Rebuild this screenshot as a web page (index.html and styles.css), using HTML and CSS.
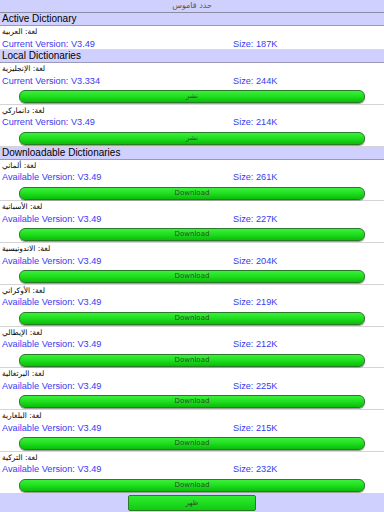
FILE: index.html
```html
<!DOCTYPE html>
<html>
<head>
<meta charset="utf-8">
<link rel="stylesheet" href="styles.css">
</head>
<body>
<div class="page">
  <div class="title">حدد قاموس</div>

  <div class="section">Active Dictionary</div>
  <div class="item item-active">
    <div class="lang">لغة: العربية</div>
    <div class="ver"><span>Current Version: V3.49</span><span>Size: 187K</span></div>
  </div>

  <div class="section">Local Dictionaries</div>
  <div class="item">
    <div class="lang">لغة: الإنجليزية</div>
    <div class="ver"><span>Current Version: V3.334</span><span>Size: 244K</span></div>
    <div class="btn">نشر</div>
  </div>
  <div class="item">
    <div class="lang">لغة: دانماركي</div>
    <div class="ver"><span>Current Version: V3.49</span><span>Size: 214K</span></div>
    <div class="btn">نشر</div>
  </div>

  <div class="section">Downloadable Dictionaries</div>
  <div class="item">
    <div class="lang">لغة: ألماني</div>
    <div class="ver"><span>Available Version: V3.49</span><span>Size: 261K</span></div>
    <div class="btn">Download</div>
  </div>
  <div class="item">
    <div class="lang">لغة: الأسبانية</div>
    <div class="ver"><span>Available Version: V3.49</span><span>Size: 227K</span></div>
    <div class="btn">Download</div>
  </div>
  <div class="item">
    <div class="lang">لغة: الاندونيسية</div>
    <div class="ver"><span>Available Version: V3.49</span><span>Size: 204K</span></div>
    <div class="btn">Download</div>
  </div>
  <div class="item">
    <div class="lang">لغة: الأوكراني</div>
    <div class="ver"><span>Available Version: V3.49</span><span>Size: 219K</span></div>
    <div class="btn">Download</div>
  </div>
  <div class="item">
    <div class="lang">لغة: الإيطالي</div>
    <div class="ver"><span>Available Version: V3.49</span><span>Size: 212K</span></div>
    <div class="btn">Download</div>
  </div>
  <div class="item">
    <div class="lang">لغة: البرتغالية</div>
    <div class="ver"><span>Available Version: V3.49</span><span>Size: 225K</span></div>
    <div class="btn">Download</div>
  </div>
  <div class="item">
    <div class="lang">لغة: البلغارية</div>
    <div class="ver"><span>Available Version: V3.49</span><span>Size: 215K</span></div>
    <div class="btn">Download</div>
  </div>
  <div class="item">
    <div class="lang">لغة: التركية</div>
    <div class="ver"><span>Available Version: V3.49</span><span>Size: 232K</span></div>
    <div class="btn">Download</div>
  </div>

  <div class="footer">
    <div class="btn-foot">ظهر</div>
  </div>
</div>
</body>
</html>
```

FILE: styles.css
```css
* { box-sizing: border-box; }
html, body {
  margin: 0;
  padding: 0;
  background: #ffffff;
}
body {
  font-family: "Liberation Sans", "DejaVu Sans", Arial, sans-serif;
  width: 384px;
  height: 512px;
  overflow: hidden;
}
.page {
  display: flex;
  flex-direction: column;
}
.title {
  height: 13px;
  background: #d0d0fe;
  border-bottom: 1px solid #8c8ca0;
  text-align: center;
  font-size: 8px;
  line-height: 12px;
  color: #555555;
  font-family: "DejaVu Sans", sans-serif;
}
.section {
  height: 13px;
  background: #d0d0fe;
  border-bottom: 1px solid #9a9ab8;
  font-size: 10px;
  line-height: 12px;
  color: #000000;
  padding-left: 2px;
}
.item {
  border-bottom: 1px solid #d4d4d4;
  display: flex;
  flex-direction: column;
  height: 41.75px;
}
.item-active {
  height: 24px;
  border-bottom: 1px solid #dcdcd0;
}
.lang {
  height: 11.5px;
  font-size: 7.5px;
  line-height: 11px;
  color: #000000;
  padding-left: 2px;
  text-align: left;
  font-family: "DejaVu Sans", sans-serif;
}
.ver {
  height: 13.5px;
  display: grid;
  grid-template-columns: 231px 1fr;
  font-size: 9.2px;
  line-height: 13.5px;
  color: #3a3af2;
  padding-left: 2px;
}
.item-active .ver { height: 11.5px; line-height: 12px; }
.btn {
  width: 346px;
  margin: 2px auto 0;
  height: 13px;
  border: 1px solid #2a7a2a;
  border-radius: 6px;
  background: linear-gradient(#3cf03c, #1ede1e 50%, #0cbc0c);
  box-shadow: 0 1px 0 #9aa29a;
  text-align: center;
  font-size: 7px;
  line-height: 11px;
  color: #2f4a2f;
  font-family: "DejaVu Sans", sans-serif;
}
.footer {
  height: 18.5px;
  background: #d0d0fe;
  display: flex;
  justify-content: center;
  padding-top: 1px;
}
.btn-foot {
  width: 128px;
  height: 16px;
  border: 1px solid #2a7a2a;
  border-radius: 2px;
  background: linear-gradient(#30ec30, #10cc10);
  text-align: center;
  font-size: 7px;
  line-height: 14px;
  color: #2f4a2f;
  font-family: "DejaVu Sans", sans-serif;
}
```
